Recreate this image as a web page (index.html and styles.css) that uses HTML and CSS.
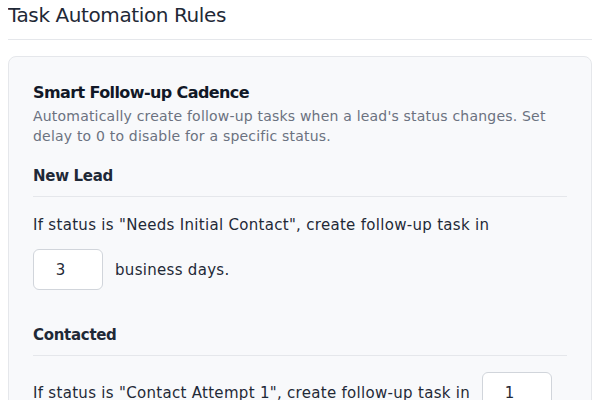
FILE: index.html
```html
<html>
	<head>
		<title>Task Automation Rules</title>
		<link rel="stylesheet" href="styles.css">
	</head>
	<body>
		<div class="page-header">
			<h1 class="page-title">Task Automation Rules</h1>
		</div>

		<div class="rule-card">
			<div class="rule-intro">
				<h2 class="rule-title">Smart Follow-up Cadence</h2>
				<p class="rule-desc">Automatically create follow-up tasks when a lead's status changes. Set delay to 0 to disable for a specific status.</p>
			</div>

			<div class="rule-section">
				<h3 class="section-title">New Lead</h3>
				<div class="rule-row">
					<span>If status is "Needs Initial Contact", create follow-up task in</span>
					<input class="days-input" type="number" name="new-lead-days" value="3" min="0">
					<span>business days.</span>
				</div>
			</div>

			<div class="rule-section">
				<h3 class="section-title">Contacted</h3>
				<div class="rule-row">
					<span>If status is "Contact Attempt 1", create follow-up task in</span>
					<input class="days-input" type="number" name="contacted-days" value="1" min="0">
					<span>business days.</span>
				</div>
			</div>
		</div>
	</body>
</html>
```
FILE: styles.css
```css
body {
	margin: 0 8px;
	font-family: "DejaVu Sans", sans-serif;
	color: #1f2937;
	background: #ffffff;
}
h1, h2, h3, p {
	margin: 0;
}

.page-header {
	padding-bottom: 9px;
	border-bottom: 1px solid #e5e7eb;
	margin-bottom: 16px;
}
.page-title {
	font-size: 20px;
	line-height: 30px;
	font-weight: normal;
	color: #1f2937;
	letter-spacing: -0.4px;
}

.rule-card {
	background-color: #f8f9fb;
	border: 1px solid #e5e7eb;
	border-radius: 8px;
	padding: 24px;
}
.rule-intro {
	margin-bottom: 18px;
}
.rule-title {
	font-size: 16px;
	line-height: 24px;
	font-weight: bold;
	color: #111827;
	letter-spacing: -0.6px;
}
.rule-desc {
	margin-top: 1px;
	font-size: 14px;
	line-height: 20px;
	color: #6b7280;
	letter-spacing: 0.2px;
}

.rule-section + .rule-section {
	margin-top: 33px;
}
.section-title {
	font-size: 15px;
	line-height: 24px;
	font-weight: bold;
	color: #1f2937;
	padding-bottom: 8px;
	border-bottom: 1px solid #e5e7eb;
	margin-bottom: 16px;
	letter-spacing: -0.3px;
}
.rule-row {
	display: flex;
	flex-wrap: wrap;
	align-items: center;
	gap: 12px;
	font-size: 15px;
	line-height: 24px;
	letter-spacing: 0.3px;
}

.days-input {
	width: 70px;
	height: 41px;
	box-sizing: border-box;
	padding: 0 27px 0 12px;
	border: 1px solid #d1d5db;
	border-radius: 6px;
	background: #ffffff;
	font-family: "DejaVu Sans", sans-serif;
	font-size: 15px;
	color: #1f2937;
	text-align: center;
	-moz-appearance: textfield;
}
.days-input::-webkit-inner-spin-button,
.days-input::-webkit-outer-spin-button {
	-webkit-appearance: none;
	margin: 0;
}
```
